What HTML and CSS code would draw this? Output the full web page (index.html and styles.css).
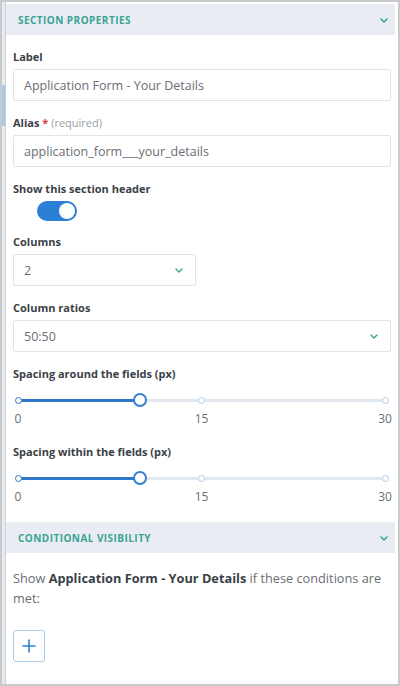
FILE: index.html
```html
<!DOCTYPE html>
<html>
<head>
<meta charset="utf-8">
<link rel="stylesheet" href="styles.css">
</head>
<body>
<div class="frame">
  <div class="rail"><div class="rail-mark"></div></div>
  <div class="panel">
    <div class="band">
      <span class="band-title">Section Properties</span>
      <svg class="chev" width="8" height="5" viewBox="0 0 8 5"><path d="M1 1 L4 4 L7 1" fill="none" stroke="#3aa394" stroke-width="1.6" stroke-linecap="round" stroke-linejoin="round"/></svg>
    </div>
    <div class="body">
      <div class="field">
        <div class="label">Label</div>
        <div class="input">Application Form - Your Details</div>
      </div>
      <div class="field">
        <div class="label">Alias <span class="req">*</span> <span class="hint">(required)</span></div>
        <div class="input">application_form___your_details</div>
      </div>
      <div class="field toggle-field">
        <div class="label">Show this section header</div>
        <div class="toggle"><div class="knob"></div></div>
      </div>
      <div class="field">
        <div class="label">Columns</div>
        <div class="input select half"><span>2</span>
          <svg width="8" height="5" viewBox="0 0 8 5"><path d="M1 1 L4 4 L7 1" fill="none" stroke="#3aa394" stroke-width="1.4" stroke-linecap="round" stroke-linejoin="round"/></svg>
        </div>
      </div>
      <div class="field">
        <div class="label">Column ratios</div>
        <div class="input select"><span>50:50</span>
          <svg width="8" height="5" viewBox="0 0 8 5"><path d="M1 1 L4 4 L7 1" fill="none" stroke="#3aa394" stroke-width="1.4" stroke-linecap="round" stroke-linejoin="round"/></svg>
        </div>
      </div>
      <div class="field slider-field">
        <div class="label">Spacing around the fields (px)</div>
        <div class="slider">
          <div class="track"><div class="fill" style="width:33.333%"></div></div>
          <div class="dot start" style="left:0%"></div>
          <div class="dot" style="left:50%"></div>
          <div class="dot" style="left:100%"></div>
          <div class="handle" style="left:33.333%"></div>
        </div>
        <div class="ticks">
          <span style="left:0%">0</span>
          <span style="left:50%">15</span>
          <span style="left:100%">30</span>
        </div>
      </div>
      <div class="field slider-field">
        <div class="label">Spacing within the fields (px)</div>
        <div class="slider">
          <div class="track"><div class="fill" style="width:33.333%"></div></div>
          <div class="dot start" style="left:0%"></div>
          <div class="dot" style="left:50%"></div>
          <div class="dot" style="left:100%"></div>
          <div class="handle" style="left:33.333%"></div>
        </div>
        <div class="ticks">
          <span style="left:0%">0</span>
          <span style="left:50%">15</span>
          <span style="left:100%">30</span>
        </div>
      </div>
    </div>
    <div class="band">
      <span class="band-title">Conditional Visibility</span>
      <svg class="chev" width="8" height="5" viewBox="0 0 8 5"><path d="M1 1 L4 4 L7 1" fill="none" stroke="#3aa394" stroke-width="1.6" stroke-linecap="round" stroke-linejoin="round"/></svg>
    </div>
    <div class="body cond">
      <p class="cond-text"><span>Show</span> <b>Application Form - Your Details</b> <span>if these conditions are</span> <span>met:</span></p>
      <button class="add" type="button">
        <svg width="14" height="14" viewBox="0 0 14 14"><path d="M7 1 V13 M1 7 H13" stroke="#2b7fd4" stroke-width="1.6" stroke-linecap="round"/></svg>
      </button>
    </div>
  </div>
</div>
</body>
</html>
```

FILE: styles.css
```css
* { box-sizing: border-box; }
html, body { margin: 0; padding: 0; background: #ffffff; }
body { font-family: "Open Sans", "Liberation Sans", sans-serif; color: #3a3f47; }

.frame {
  width: 400px;
  height: 686px;
  border: 2px solid #c9cacc;
  display: flex;
  overflow: hidden;
}

.rail {
  width: 4px;
  flex: none;
  background: #e8ebf0;
  border-right: 1px solid #cdd1d7;
}
.rail-mark {
  margin-top: 83px;
  height: 41px;
  background: #a9c9ea;
}

.panel {
  flex: 1;
  padding: 2px 3px 0 0;
  display: flex;
  flex-direction: column;
}

.band {
  height: 31px;
  background: #e9edf3;
  display: flex;
  align-items: center;
  justify-content: space-between;
  padding: 0 7px 0 12px;
}
.band-title {
  text-transform: uppercase;
  font-size: 10px;
  font-weight: 700;
  letter-spacing: 0.45px;
  color: #3aa394;
}
.chev { margin-top: 1px; }

.body { padding: 14px 4px 0 7px; }

.field { margin-bottom: 14px; }
.toggle-field { margin-bottom: 13px; }
.label {
  font-size: 11px;
  font-weight: 700;
  line-height: 16px;
  color: #3a3f47;
  margin-bottom: 4px;
}
.req { color: #d9383e; font-weight: 700; }
.hint { color: #9a9ea4; font-weight: 400; font-size: 11px; }

.input {
  height: 32px;
  border: 1px solid #e0e4e9;
  border-radius: 2px;
  padding: 0 10px;
  display: flex;
  align-items: center;
  font-size: 12.5px;
  color: #6a6e74;
  background: #fff;
}
.select { justify-content: space-between; padding-right: 12px; }
.select.half { width: 183px; }

.toggle {
  margin-left: 24px;
  width: 40px;
  height: 20px;
  border-radius: 10px;
  background: #2b7fd4;
  display: flex;
  justify-content: flex-end;
  align-items: center;
  padding: 2px;
}
.knob {
  width: 16px;
  height: 16px;
  border-radius: 50%;
  background: #fff;
}

.slider-field { margin-bottom: 17px; }
.slider {
  position: relative;
  margin: 8px 6px 0 5px;
  height: 20px;
}
.track {
  position: absolute;
  left: 0; right: 0; top: 9px;
  height: 3px;
  background: #e3e8ef;
  border-radius: 2px;
}
.fill {
  height: 3px;
  background: #2f78c8;
  border-radius: 2px;
}
.dot {
  position: absolute;
  top: 7px;
  width: 7px;
  height: 7px;
  margin-left: -3.5px;
  border-radius: 50%;
  border: 1.5px solid #a9cdf0;
  background: #fff;
}
.dot.start { border-color: #2f78c8; }
.handle {
  position: absolute;
  top: 3px;
  width: 14px;
  height: 14px;
  margin-left: -7px;
  border-radius: 50%;
  border: 2px solid #3a80d0;
  background: #fff;
}
.ticks {
  position: relative;
  margin: 1px 6px 0 5px;
  height: 16px;
  font-size: 12px;
  line-height: 16px;
  color: #6a6e74;
}
.ticks span {
  position: absolute;
  top: 0;
  transform: translateX(-50%);
}

.cond { padding-top: 15px; }
.cond-text {
  margin: 0;
  font-size: 12.75px;
  line-height: 20px;
  color: #6a6e74;
}
.cond-text b { color: #3a3f47; font-weight: 700; }

.add {
  margin-top: 22px;
  width: 32px;
  height: 32px;
  border: 1px solid #a9cbee;
  border-radius: 3px;
  background: #fff;
  display: flex;
  align-items: center;
  justify-content: center;
  padding: 0;
}
```
